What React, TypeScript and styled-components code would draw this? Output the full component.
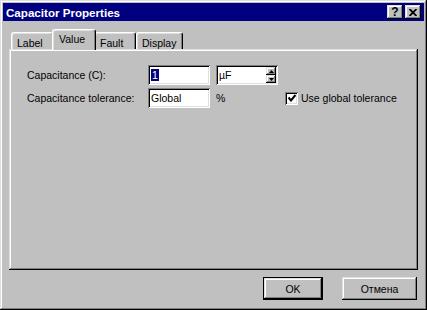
import { createGlobalStyle, styled } from 'styled-components';

const GlobalStyle = createGlobalStyle`
  html, body {
    margin: 0;
    padding: 0;
    background: #c0c0c0;
  }
  body {
    font-family: 'Liberation Sans', Arial, sans-serif;
    font-size: 10.5px;
    color: #000;
  }
`;

const raised = `
  box-shadow: inset -1px -1px #000, inset 1px 1px #dfdfdf,
    inset -2px -2px #808080, inset 2px 2px #fff;
`;

const sunken = `
  box-shadow: inset 1px 1px #808080, inset -1px -1px #fff,
    inset 2px 2px #000, inset -2px -2px #dfdfdf;
`;

const Window = styled.div`
  width: 427px;
  height: 310px;
  box-sizing: border-box;
  padding: 3px;
  background: #c0c0c0;
  display: flex;
  flex-direction: column;
  ${raised}
`;

const TitleBar = styled.div`
  height: 18px;
  background: #000080;
  display: flex;
  align-items: center;
  padding: 0 3px 0 3px;
  color: #fff;
  font-weight: bold;
  font-size: 11.6px;
`;

const Title = styled.span`
  flex: 1;
`;

const TitleButton = styled.button`
  width: 16px;
  height: 14px;
  padding: 0;
  margin-left: 2px;
  border: none;
  background: #c0c0c0;
  display: flex;
  align-items: center;
  justify-content: center;
  font-family: 'Liberation Sans', Arial, sans-serif;
  font-weight: bold;
  font-size: 12px;
  line-height: 1;
  color: #000;
  ${raised}
`;

const TabStrip = styled.div`
  margin-top: 8px;
  height: 20px;
  padding-left: 8px;
  display: flex;
  align-items: flex-end;
  position: relative;
  z-index: 1;
`;

const Tab = styled.div<{ $width: number; $active?: boolean }>`
  box-sizing: border-box;
  width: ${(p) => (p.$active ? p.$width + 4 : p.$width)}px;
  height: ${(p) => (p.$active ? 21 : 17)}px;
  margin: 0 ${(p) => (p.$active ? -2 : 0)}px ${(p) => (p.$active ? -1 : 0)}px;
  padding: ${(p) => (p.$active ? '3px 0 0 6px' : '4px 0 0 5px')};
  position: relative;
  z-index: ${(p) => (p.$active ? 2 : 1)};
  background: #c0c0c0;
  border-top: 1px solid #fff;
  border-left: 1px solid #fff;
  border-right: 1px solid #000;
  border-radius: 3px 3px 0 0;
  box-shadow: inset -1px 0 #808080, inset 1px 1px #dfdfdf;
  white-space: nowrap;
`;

const Panel = styled.div`
  margin: 0 6px;
  height: 221px;
  box-sizing: border-box;
  padding: 16px 0 0 18px;
  ${raised}
`;

const Form = styled.div`
  display: grid;
  grid-template-columns: 121px 68px 69px auto;
  grid-auto-rows: 20px;
  row-gap: 3px;
  align-items: center;
`;

const Field = styled.div<{ $width: number }>`
  width: ${(p) => p.$width}px;
  height: 20px;
  box-sizing: border-box;
  padding: 2px 2px 2px 3px;
  background: #fff;
  display: flex;
  align-items: center;
  ${sunken}
`;

const FieldText = styled.span`
  flex: 1;
`;

const Selected = styled.span`
  background: #000080;
  color: #fff;
  line-height: 13px;
  padding: 0 1px;
`;

const SpinColumn = styled.div`
  width: 10px;
  height: 16px;
  display: flex;
  flex-direction: column;
`;

const SpinButton = styled.div`
  flex: 1;
  background: #c0c0c0;
  display: flex;
  align-items: center;
  justify-content: center;
  ${raised}
`;

const Unit = styled.span``;

const CheckRow = styled.label`
  display: flex;
  align-items: center;
  gap: 3px;
`;

const CheckBox = styled.span`
  width: 13px;
  height: 13px;
  background: #fff;
  display: flex;
  align-items: center;
  justify-content: center;
  ${sunken}
`;

const ButtonRow = styled.div`
  margin-top: 7px;
  padding-right: 7px;
  display: flex;
  justify-content: flex-end;
  gap: 19px;
`;

const DialogButton = styled.button<{ $width: number; $default?: boolean }>`
  width: ${(p) => p.$width}px;
  height: 23px;
  padding: 0;
  background: #c0c0c0;
  font-family: 'Liberation Sans', Arial, sans-serif;
  font-size: 10.5px;
  color: #000;
  border: ${(p) => (p.$default ? '1px solid #000' : 'none')};
  ${raised}
`;

function Arrow({ up }: { up?: boolean }) {
  return (
    <svg width="5" height="3" viewBox="0 0 5 3">
      <path d={up ? 'M2.5 0 L5 3 L0 3 Z' : 'M0 0 L5 0 L2.5 3 Z'} fill="#000" />
    </svg>
  );
}

export default function App() {
  return (
    <>
      <GlobalStyle />
      <Window>
        <TitleBar>
          <Title>Capacitor Properties</Title>
          <TitleButton>?</TitleButton>
          <TitleButton>
            <svg width="8" height="7" viewBox="0 0 8 7">
              <path d="M0.5 0 L7.5 7 M7.5 0 L0.5 7" stroke="#000" strokeWidth="1.8" />
            </svg>
          </TitleButton>
        </TitleBar>

        <TabStrip>
          <Tab $width={43}>Label</Tab>
          <Tab $width={40} $active>
            Value
          </Tab>
          <Tab $width={42}>Fault</Tab>
          <Tab $width={47}>Display</Tab>
        </TabStrip>

        <Panel>
          <Form>
            <span>Capacitance (C):</span>
            <Field $width={62}>
              <FieldText>
                <Selected>1</Selected>
              </FieldText>
            </Field>
            <Field $width={62}>
              <FieldText>µF</FieldText>
              <SpinColumn>
                <SpinButton>
                  <Arrow up />
                </SpinButton>
                <SpinButton>
                  <Arrow />
                </SpinButton>
              </SpinColumn>
            </Field>
            <span />

            <span>Capacitance tolerance:</span>
            <Field $width={62}>
              <FieldText>Global</FieldText>
            </Field>
            <Unit>%</Unit>
            <CheckRow>
              <CheckBox>
                <svg width="8" height="8" viewBox="0 0 8 8">
                  <path d="M0.5 3.5 L3 6.5 L7.5 1" stroke="#000" strokeWidth="2" fill="none" />
                </svg>
              </CheckBox>
              Use global tolerance
            </CheckRow>
          </Form>
        </Panel>

        <ButtonRow>
          <DialogButton $width={60} $default>
            OK
          </DialogButton>
          <DialogButton $width={75}>Отмена</DialogButton>
        </ButtonRow>
      </Window>
    </>
  );
}
